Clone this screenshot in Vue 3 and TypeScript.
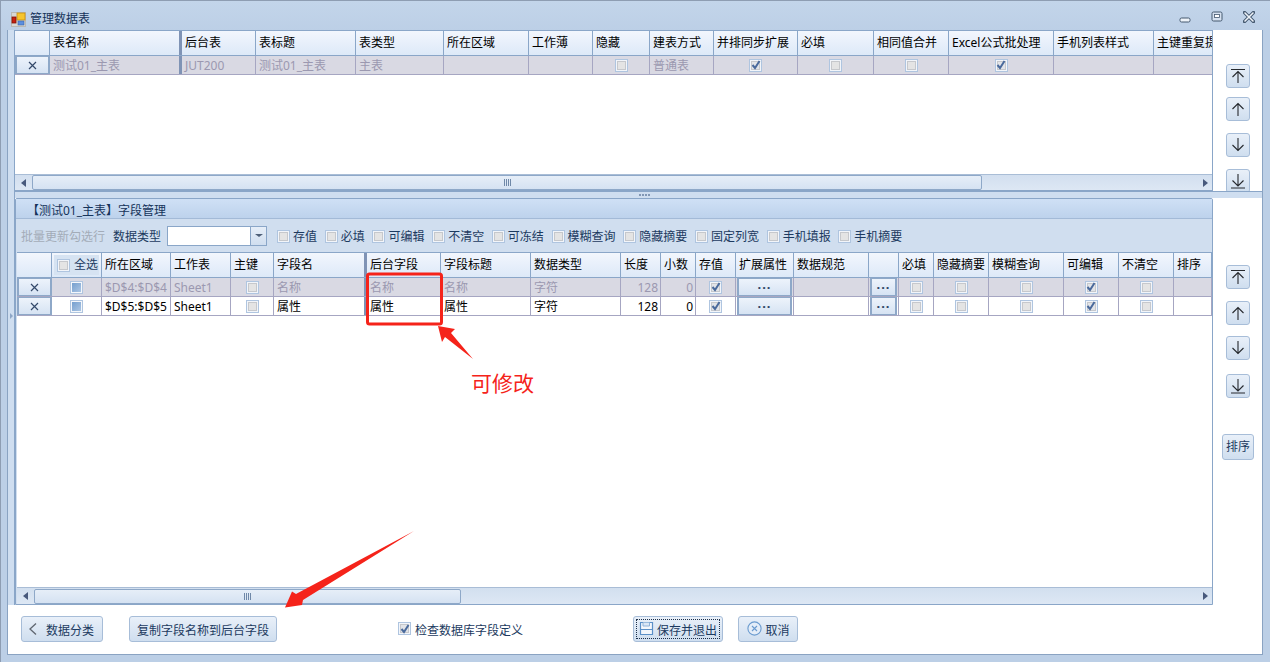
<script setup lang="ts">
type Kind = 'text' | 'num' | 'x' | 'box' | 'tick' | 'ind' | 'more' | 'all'
interface Col { title: string; w: number; thick?: boolean }
interface Cell { k: Kind; t?: string }

const edges = (xs: number[]) => xs.slice(1).map((x, i) => x - xs[i])

const topXs = [15, 50, 182, 256, 356, 444, 529, 593, 650, 714, 798, 874, 949, 1054, 1154, 1214]
const topTitles = ['', '表名称', '后台表', '表标题', '表类型', '所在区域', '工作薄', '隐藏', '建表方式', '并排同步扩展', '必填', '相同值合并', 'Excel公式批处理', '手机列表样式', '主键重复提示']
const topCols: Col[] = edges(topXs).map((w, i) => ({ title: topTitles[i], w, thick: i === 1 }))
const topRow: Cell[] = [
  { k: 'x' }, { k: 'text', t: '测试01_主表' }, { k: 'text', t: 'JUT200' }, { k: 'text', t: '测试01_主表' },
  { k: 'text', t: '主表' }, { k: 'text' }, { k: 'text' }, { k: 'box' }, { k: 'text', t: '普通表' },
  { k: 'tick' }, { k: 'box' }, { k: 'box' }, { k: 'tick' }, { k: 'text' }, { k: 'text' },
]

const fieldXs = [17, 52, 102, 171, 231, 274, 367, 441, 531, 621, 661, 696, 736, 794, 869, 899, 934, 989, 1064, 1119, 1174, 1212]
const fieldTitles = ['', '全选', '所在区域', '工作表', '主键', '字段名', '后台字段', '字段标题', '数据类型', '长度', '小数', '存值', '扩展属性', '数据规范', '', '必填', '隐藏摘要', '模糊查询', '可编辑', '不清空', '排序']
const fieldCols: Col[] = edges(fieldXs).map((w, i) => ({ title: fieldTitles[i], w, thick: i === 5 }))
const fieldRow = (range: string, name: string): Cell[] => [
  { k: 'x' }, { k: 'ind' }, { k: 'text', t: range }, { k: 'text', t: 'Sheet1' }, { k: 'box' },
  { k: 'text', t: name }, { k: 'text', t: name }, { k: 'text', t: name }, { k: 'text', t: '字符' },
  { k: 'num', t: '128' }, { k: 'num', t: '0' }, { k: 'tick' }, { k: 'more' }, { k: 'text' }, { k: 'more' },
  { k: 'box' }, { k: 'box' }, { k: 'box' }, { k: 'tick' }, { k: 'box' }, { k: 'text' },
]
const fieldRows = [
  { dim: true, cells: fieldRow('$D$4:$D$4', '名称') },
  { dim: false, cells: fieldRow('$D$5:$D$5', '属性') },
]
const toolChecks = ['存值', '必填', '可编辑', '不清空', '可冻结', '模糊查询', '隐藏摘要', '固定列宽', '手机填报', '手机摘要']
</script>

<template>
  <div class="window">
    <header class="titlebar">
      <svg class="appicon" width="15" height="15" viewBox="0 0 15 15">
        <rect x="0.5" y="0.5" width="14" height="14" fill="#d8d8d4" stroke="#b9b9b4" />
        <rect x="6" y="1" width="8" height="7" fill="#f6c52e" stroke="#c98f10" stroke-width="0.8" />
        <rect x="1" y="5" width="4" height="6" fill="#c8200f" stroke="#7d1408" stroke-width="0.8" />
        <rect x="7" y="9" width="6" height="4" fill="#5b8fe0" stroke="#3a64a8" stroke-width="0.6" />
      </svg>
      <span class="wintitle">管理数据表</span>
      <div class="winbtns">
        <svg width="12" height="12" viewBox="0 0 12 12"><rect x="1" y="7" width="10" height="4" rx="1.5" fill="#eef3f9" stroke="#44586f" /></svg>
        <svg width="12" height="12" viewBox="0 0 12 12"><rect x="1" y="1" width="10" height="9" rx="1.5" fill="#d5e1f0" stroke="#44586f" /><rect x="3.5" y="3.5" width="5" height="3" fill="#fff" stroke="#44586f" stroke-width="0.8" /></svg>
        <svg width="12" height="12" viewBox="0 0 12 12"><path d="M1.5 1.5 L10.5 10.5 M10.5 1.5 L1.5 10.5" stroke="#44586f" stroke-width="3.4" stroke-linecap="round" /><path d="M2 2 L10 10 M10 2 L2 10" stroke="#eef3f9" stroke-width="1.6" stroke-linecap="round" /></svg>
      </div>
    </header>

    <div class="client">
      <div class="workarea">
        <aside class="strip"><i class="striparrow"></i></aside>
        <div class="panes">
          <section class="toppane">
            <div class="gridbox topgrid">
              <div class="gridbody">
                <div class="row head">
                  <div v-for="(c, i) in topCols" :key="i" class="cell" :class="{ thick: c.thick }" :style="{ width: c.w + 'px' }">{{ c.title }}</div>
                </div>
                <div class="row data dim">
                  <div v-for="(c, i) in topRow" :key="i" class="cell" :class="[c.k, { thick: topCols[i].thick }]" :style="{ width: topCols[i].w + 'px' }">
                    <span v-if="c.k === 'x'" class="xbtn"><svg width="9" height="9" viewBox="0 0 9 9"><path d="M1 1L8 8M8 1L1 8" stroke="#34496a" stroke-width="1.2" /></svg></span>
                    <span v-else-if="c.k === 'box'" class="check"></span>
                    <span v-else-if="c.k === 'tick'" class="check on"><svg width="10" height="10" viewBox="0 0 10 10"><path d="M1.5 5 L4 8 L8.5 1" fill="none" stroke="#4a6a9c" stroke-width="2" /></svg></span>
                    <template v-else>{{ c.t }}</template>
                  </div>
                </div>
              </div>
              <div class="hscroll">
                <i class="arrow left"></i>
                <div class="thumb t1"><span class="grip"><b></b><b></b><b></b><b></b></span></div>
                <i class="arrow right"></i>
              </div>
            </div>
            <div class="side sidetop">
              <button class="sq"><svg width="20" height="20" viewBox="0 0 20 20"><path d="M3 3.5H17M10 5V17M4.5 11L10 5.5L15.5 11" fill="none" stroke="#26292e" stroke-width="1.1" /></svg></button>
              <button class="sq s5"><svg width="20" height="20" viewBox="0 0 20 20"><path d="M10 4V17M4.5 10L10 4.5L15.5 10" fill="none" stroke="#26292e" stroke-width="1.1" /></svg></button>
              <button class="sq s6"><svg width="20" height="20" viewBox="0 0 20 20"><path d="M10 3V16M4.5 10L10 15.5L15.5 10" fill="none" stroke="#26292e" stroke-width="1.1" /></svg></button>
              <button class="sq s6"><svg width="20" height="20" viewBox="0 0 20 20"><path d="M3 17H17M10 3V15M4.5 9.5L10 15L15.5 9.5" fill="none" stroke="#26292e" stroke-width="1.1" /></svg></button>
            </div>
          </section>

          <div class="splitter"><span class="dots"><b></b><b></b><b></b><b></b></span></div>

          <section class="bottompane">
            <div class="fieldpanel">
              <div class="paneltitle">【测试01_主表】字段管理</div>
              <div class="toolbar">
                <span class="disabled">批量更新勾选行</span>
                <span class="lbl">数据类型</span>
                <span class="combo"><span class="comboinput"></span><span class="combobtn"><i></i></span></span>
                <div class="toolchecks">
                  <label v-for="t in toolChecks" :key="t" class="toolcheck"><span class="check"></span>{{ t }}</label>
                </div>
              </div>
              <div class="gridbox fieldgrid">
                <div class="gridbody">
                  <div class="row head">
                    <div v-for="(c, i) in fieldCols" :key="i" class="cell" :class="{ thick: c.thick }" :style="{ width: c.w + 'px' }">
                      <span v-if="c.title === '全选'" class="allsel"><span class="check"></span>全选</span>
                      <template v-else>{{ c.title }}</template>
                    </div>
                  </div>
                  <div v-for="(r, ri) in fieldRows" :key="ri" class="row data" :class="{ dim: r.dim }">
                    <div v-for="(c, i) in r.cells" :key="i" class="cell" :class="[c.k, { thick: fieldCols[i].thick }]" :style="{ width: fieldCols[i].w + 'px' }">
                      <span v-if="c.k === 'x'" class="xbtn"><svg width="9" height="9" viewBox="0 0 9 9"><path d="M1 1L8 8M8 1L1 8" stroke="#34496a" stroke-width="1.2" /></svg></span>
                      <span v-else-if="c.k === 'box'" class="check"></span>
                      <span v-else-if="c.k === 'ind'" class="check indet"></span>
                      <span v-else-if="c.k === 'tick'" class="check on"><svg width="10" height="10" viewBox="0 0 10 10"><path d="M1.5 5 L4 8 L8.5 1" fill="none" stroke="#4a6a9c" stroke-width="2" /></svg></span>
                      <span v-else-if="c.k === 'more'" class="morebtn">···</span>
                      <template v-else>{{ c.t }}</template>
                    </div>
                  </div>
                </div>
                <div class="hscroll">
                  <i class="arrow left"></i>
                  <div class="thumb t2"><span class="grip"><b></b><b></b><b></b><b></b></span></div>
                  <i class="arrow right"></i>
                </div>
              </div>
            </div>
            <div class="side sidebottom">
              <button class="sq"><svg width="20" height="20" viewBox="0 0 20 20"><path d="M3 3.5H17M10 5V17M4.5 11L10 5.5L15.5 11" fill="none" stroke="#26292e" stroke-width="1.1" /></svg></button>
              <button class="sq s2"><svg width="20" height="20" viewBox="0 0 20 20"><path d="M10 4V17M4.5 10L10 4.5L15.5 10" fill="none" stroke="#26292e" stroke-width="1.1" /></svg></button>
              <button class="sq s3"><svg width="20" height="20" viewBox="0 0 20 20"><path d="M10 3V16M4.5 10L10 15.5L15.5 10" fill="none" stroke="#26292e" stroke-width="1.1" /></svg></button>
              <button class="sq s4"><svg width="20" height="20" viewBox="0 0 20 20"><path d="M3 17H17M10 3V15M4.5 9.5L10 15L15.5 9.5" fill="none" stroke="#26292e" stroke-width="1.1" /></svg></button>
              <button class="btn sortbtn">排序</button>
            </div>
          </section>
        </div>
      </div>

      <footer class="footer">
        <button class="btn b1">
          <svg width="10" height="14" viewBox="0 0 10 14"><path d="M8 1.5L2 7L8 12.5" fill="none" stroke="#5f6670" stroke-width="1.3" /></svg>
          <span class="btext">数据分类</span>
        </button>
        <button class="btn b2"><span class="btext">复制字段名称到后台字段</span></button>
        <label class="dbcheck"><span class="check on"><svg width="10" height="10" viewBox="0 0 10 10"><path d="M1.5 5 L4 8 L8.5 1" fill="none" stroke="#4a6a9c" stroke-width="2" /></svg></span><span class="btext">检查数据库字段定义</span></label>
        <button class="btn b3">
          <span class="focusring">
            <svg width="15" height="15" viewBox="0 0 15 15"><path d="M1.5 1.5H13.5V13.5H1.5Z" fill="#f3f7fc" stroke="#5b90c8" stroke-width="1.2" /><path d="M1.5 8.5H13.5" stroke="#5b90c8" /><path d="M4 1.5V5H10.5V1.5" fill="#dbe7f5" stroke="#8fb2d8" /></svg>
            <span class="btext">保存并退出</span>
          </span>
        </button>
        <button class="btn b4">
          <svg width="15" height="15" viewBox="0 0 15 15"><circle cx="7.5" cy="7.5" r="6.6" fill="#e4edf8" stroke="#6b9bcf" stroke-width="1.1" /><path d="M5 5L10 10M10 5L5 10" stroke="#6b9bcf" stroke-width="1.1" /></svg>
          <span class="btext">取消</span>
        </button>
      </footer>
    </div>

    <svg class="marks" width="1270" height="662" viewBox="0 0 1270 662">
      <rect x="367.5" y="274" width="74" height="50" rx="2" fill="none" stroke="#f5231a" stroke-width="3" />
      <path d="M438 326L455 329L451 333L473 359L445 337L442 342Z" fill="#f5231a" />
      <path d="M414 531L296 594L292 591.5L285 607.5L302 605L303 600Z" fill="#f5231a" />
    </svg>
    <span class="note">可修改</span>
  </div>
</template>

<style>
html, body { margin: 0; padding: 0; background: #bfd2e8; }
</style>

<style scoped>
* { box-sizing: border-box; }
.window {
  position: relative; width: 1270px; height: 662px; overflow: hidden;
  display: flex; flex-direction: column;
  border-top: 1px solid #8e9db2; border-left: 1px solid #8e9db2;
  background: linear-gradient(#c3d5ea, #bccfe6 30px, #bccfe6);
  font: 12px/1 "Noto Sans", "Noto Sans CJK SC", sans-serif; color: #000;
}
.titlebar { height: 29px; flex: none; display: flex; align-items: center; padding: 7px 15px 0 10px; }
.appicon { flex: none; }
.wintitle { margin-left: 4px; color: #15335a; }
.winbtns { margin-left: auto; display: flex; gap: 20px; margin-top: -5px; }
.client {
  flex: 1; margin: 0 7px 7px 6px; background: #fff;
  border: 1px solid #8aa3c2; border-top: 0; display: flex; flex-direction: column; min-height: 0;
}
.workarea { flex: 1; display: flex; min-height: 0; }
.strip { width: 7px; flex: none; background: #cfdef0; border-right: 1px solid #8aa6c8; position: relative; }
.striparrow { position: absolute; left: 2px; top: 283px; border-left: 3px solid #8da6c6; border-top: 3px solid transparent; border-bottom: 3px solid transparent; }
.panes { flex: 1; display: flex; flex-direction: column; min-width: 0; }
.toppane { height: 161px; flex: none; display: flex; overflow: hidden; }
.gridbox { display: flex; flex-direction: column; overflow: hidden; background: #fff; }
.topgrid { width: 1198px; flex: none; border-right: 1px solid #8aa6c8; border-bottom: 1px solid #8aa6c8; }
.gridbody { flex: 1; overflow: hidden; min-height: 0; }
.row { display: flex; flex: none; }
.row.head { height: 26px; border-top: 1px solid #8aa6c8; border-bottom: 1px solid #8aa6c8; }
.row.data { height: 19px; border-bottom: 1px solid #a6a6c2; background: #fff; }
.row.dim { background: #d9d9e3; color: #9b98b0; }
.cell {
  flex: none; display: flex; align-items: center; padding: 0 3px;
  border-right: 1px solid #a6a6c2; white-space: nowrap; overflow: hidden;
}
.data .cell.text, .data .cell.num { padding-top: 2px; }
.head .cell {
  background: linear-gradient(#f2f6fd, #dde9f8); border-right: 1px solid #8aa6c8;
  color: #000;
}
.head .cell.thick, .cell.thick { border-right: 3px solid #7f93b5; }
.cell.x { padding: 0; border-right: 0; }
.cell.num { justify-content: flex-end; padding-right: 2px; }
.cell.box, .cell.tick, .cell.ind { justify-content: center; }
.cell.more { padding: 0 1px; }
.xbtn {
  width: 100%; height: 100%; display: flex; align-items: center; justify-content: center;
  background: linear-gradient(#edf3fb, #d6e3f3); border: 2px solid #8ea8c8; border-top-width: 1px; border-bottom-width: 1px;
}
.morebtn {
  width: 100%; height: 100%; display: flex; align-items: center; justify-content: center;
  background: linear-gradient(#edf3fb, #d6e3f3); border: 1px solid #8ea8c8; border-width: 1px 2px;
  color: #2d4565; font-size: 13px; font-weight: 700; letter-spacing: 1px;
}
.check {
  width: 13px; height: 13px; flex: none; display: inline-flex; align-items: center; justify-content: center;
  border: 1px solid #afc5e0; background: #e4e4e4;
  box-shadow: inset 0 0 0 1px #f2f5fa, inset 0 0 0 2px #c6c8cc;
}
.check.on { background: #e2e4e8; }
.check.indet { background: linear-gradient(135deg, #6f9bcc, #b2cae6); box-shadow: inset 0 0 0 1px #f4f7fb; }
.hscroll {
  height: 16px; flex: none; display: flex; align-items: center; padding: 0 4px 0 6px;
  background: linear-gradient(#d2dfef, #dde7f4); border-top: 1px solid #a9bdd6; position: relative;
}
.arrow { width: 0; height: 0; flex: none; border-top: 4px solid transparent; border-bottom: 4px solid transparent; }
.arrow.left { border-right: 5px solid #48597c; }
.arrow.right { border-left: 5px solid #48597c; margin-left: auto; }
.thumb {
  height: 15px; margin-left: 6px; display: flex; align-items: center; justify-content: center;
  background: linear-gradient(#e6eef8, #d5e2f2); border: 1px solid #8ea8c8; border-radius: 2px;
}
.t1 { width: 950px; }
.t2 { width: 427px; }
.grip { display: flex; gap: 1px; }
.grip b { width: 1px; height: 7px; background: #6f88a8; }
.side { flex: 1; background: #fff; display: flex; flex-direction: column; align-items: center; padding-left: 1px; }
.sidetop { padding-top: 34px; }
.sq {
  width: 24px; height: 24px; flex: none; padding: 0; display: flex; align-items: center; justify-content: center;
  background: linear-gradient(#e9f0f9, #cfdeef); border: 1px solid #a7bdd8; border-radius: 3px;
}
.s5 { margin-top: 9px; }
.s6 { margin-top: 12px; }
.sidebottom { padding-top: 67px; }
.s2 { margin-top: 12px; }
.s3 { margin-top: 11px; }
.s4 { margin-top: 14px; }
.btn {
  height: 26px; flex: none; padding: 0; font: inherit; color: #1c3a60;
  display: flex; align-items: center; justify-content: center;
  background: linear-gradient(#e9f0f9, #cfdeef); border: 1px solid #a7bdd8; border-radius: 3px;
}
.btext { padding-top: 5px; }
.sortbtn { width: 32px; margin-top: 36px; }
.splitter {
  height: 7px; flex: none; background: #cfdef0; border-top: 1px solid #8aa6c8;
  display: flex; align-items: center; padding-left: 624px;
}
.dots { display: flex; gap: 1px; }
.dots b { width: 2px; height: 2px; background: #8197b5; }
.bottompane { flex: 1; display: flex; min-height: 0; }
.fieldpanel {
  width: 1198px; flex: none; display: flex; flex-direction: column;
  border: 1px solid #8aa6c8; border-radius: 2px 2px 0 0; background: #d0deef;
}
.paneltitle {
  height: 20px; flex: none; display: flex; align-items: center; padding: 5px 0 0 11px; color: #15335a;
  background: linear-gradient(#cfe0f5, #bdd2ec); border-bottom: 1px solid #a3bad7;
}
.toolbar { height: 33px; flex: none; display: flex; align-items: center; padding: 2px 0 0 5px; color: #1c3a60; }
.disabled { color: #a3acb8; }
.lbl { margin-left: 8px; }
.combo { margin-left: 6px; width: 100px; height: 20px; display: flex; border: 1px solid #8aa6c8; margin-top: -2px; }
.comboinput { flex: 1; background: #fff; }
.combobtn { width: 16px; background: linear-gradient(#e6eef8, #d0deef); border-left: 1px solid #8aa6c8; display: flex; align-items: center; justify-content: center; }
.combobtn i { border-top: 3px solid #4e5f78; border-left: 4px solid transparent; border-right: 4px solid transparent; }
.toolchecks { display: flex; gap: 7.7px; margin-left: 10px; }
.toolcheck { display: flex; align-items: center; gap: 3px; }
.fieldgrid { flex: 1; margin-left: 1px; min-height: 0; border-top: 0; }
.fieldgrid .hscroll { border-top: 1px solid #a9bdd6; height: 17px; }
.allsel { margin: 0 -1px; height: 20px; width: 46px; display: flex; align-items: center; gap: 4px; padding-left: 3px; background: #d6e3f2; color: #1c3a60; }
.footer { height: 49px; flex: none; display: flex; align-items: center; padding: 0 0 2px 13px; background: #fff; }
.b1 { width: 82px; gap: 8px; padding-right: 2px; }
.b2 { width: 148px; margin-left: 26px; }
.dbcheck { display: flex; align-items: center; gap: 4px; margin-left: 121px; color: #1c3a60; }
.b3 { width: 90px; margin-left: 110px; padding: 2px; }
.focusring { width: 100%; height: 100%; display: flex; align-items: center; gap: 3px; padding-left: 2px; border: 1px dotted #1c2f4a; }
.b4 { width: 60px; margin-left: 15px; gap: 4px; }
.marks { position: absolute; left: -1px; top: -1px; pointer-events: none; }
.note { position: absolute; left: 470px; top: 369px; font-size: 21px; line-height: 1.2; color: #f5231a; font-family: "Noto Sans CJK SC", sans-serif; }
</style>
